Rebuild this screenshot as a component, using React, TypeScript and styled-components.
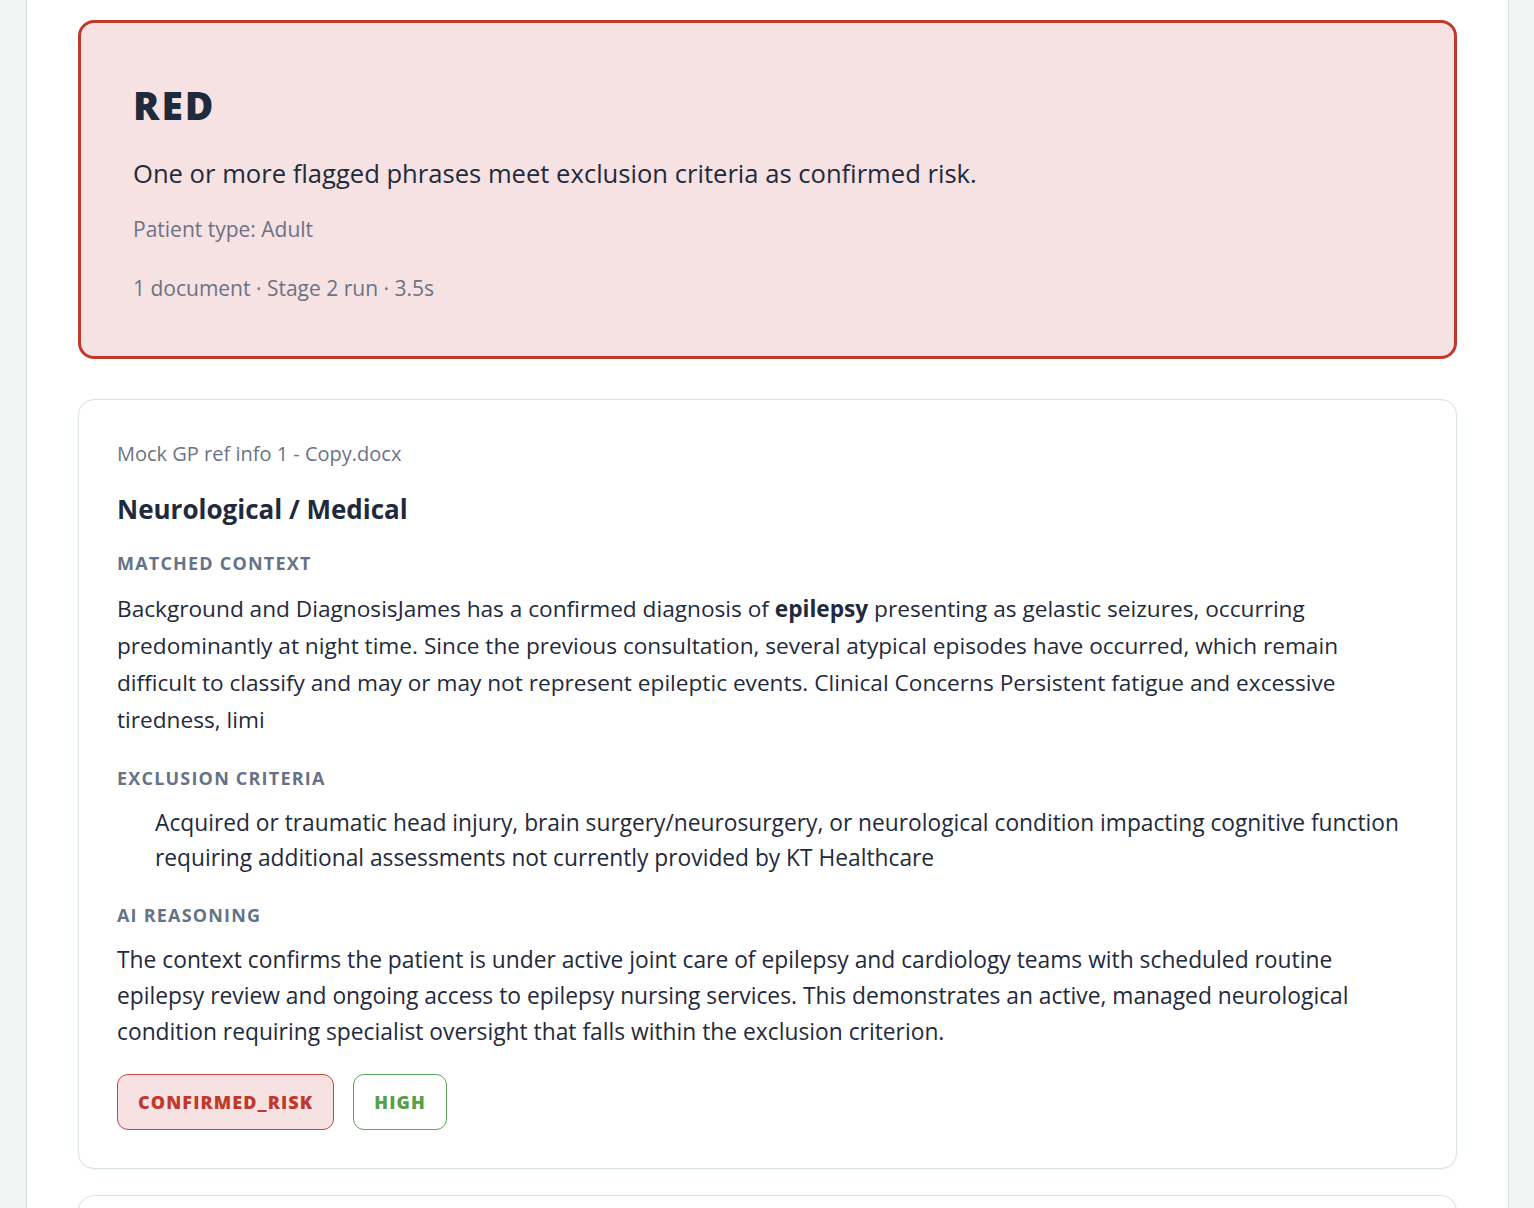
import styled, { createGlobalStyle } from "styled-components";

const GlobalStyle = createGlobalStyle`
  html, body {
    margin: 0;
    padding: 0;
    background: #f1f5f4;
    font-family: "Open Sans", "Noto Sans", sans-serif;
    color: #1f2937;
  }
  * { box-sizing: border-box; }
`;

const Page = styled.div`
  display: flex;
  justify-content: center;
  padding-left: 26px;
  padding-right: 25px;
  min-height: 1208px;
`;

const Panel = styled.main`
  width: 1483px;
  background: #ffffff;
  border-left: 1px solid #d8e4e1;
  border-right: 1px solid #d8e4e1;
  padding: 20px 51px 0;
  display: flex;
  flex-direction: column;
  gap: 26px;
`;

const Verdict = styled.section`
  background: #f7e2e3;
  border: 3px solid #c0392b;
  border-radius: 16px;
  padding: 62px 52px 53px;
  margin-bottom: 14px;
`;

const VerdictTitle = styled.h1`
  margin: 0;
  font-size: 39px;
  font-weight: 800;
  letter-spacing: 2px;
  color: #1f2a3c;
  line-height: 1;
`;

const VerdictText = styled.p`
  margin: 33px 0 0;
  font-size: 25.6px;
  line-height: 1.3;
  color: #1f2a3c;
`;

const Meta = styled.p`
  margin: 25px 0 0;
  font-size: 21px;
  line-height: 1.4;
  color: #6b7385;

  & + & {
    margin-top: 29px;
  }
`;

const Finding = styled.article`
  background: #ffffff;
  border: 1px solid #d8e4e1;
  border-radius: 16px;
  padding: 40px 38px 38px;
  box-shadow: 0 1px 3px rgba(15, 40, 35, 0.05);
`;

const FileName = styled.div`
  font-size: 20px;
  color: #6b7385;
  line-height: 1.4;
`;

const Category = styled.h2`
  margin: 25px 0 0;
  font-size: 26px;
  font-weight: 700;
  color: #1f2a3c;
  line-height: 1.3;
`;

const Label = styled.h3`
  margin: 28px 0 0;
  font-size: 18px;
  font-weight: 700;
  letter-spacing: 1.2px;
  text-transform: uppercase;
  color: #657388;
  line-height: 1.4;

  ${Category} + & {
    margin-top: 24px;
  }
`;

const Body = styled.p<{ $lead?: number; $size?: number }>`
  margin: 14px 0 0;
  font-size: ${(p) => p.$size ?? 22.65}px;
  line-height: ${(p) => p.$lead ?? 37}px;
  color: #1f2a3c;

  strong {
    font-weight: 700;
  }
`;

const Quote = styled.blockquote`
  margin: 14px 0 0 38px;
  font-size: 22.75px;
  line-height: 35px;
  color: #1f2a3c;
`;

const Badges = styled.div`
  display: flex;
  gap: 19px;
  margin-top: 24px;
`;

const Badge = styled.span<{ tone: "risk" | "ok" }>`
  display: inline-flex;
  align-items: center;
  height: 56px;
  padding: 0 20px;
  border-radius: 11px;
  font-size: 18px;
  font-weight: 800;
  letter-spacing: 1.1px;
  background: ${(p) => (p.tone === "risk" ? "#f7e2e3" : "#ffffff")};
  border: 1px solid ${(p) => (p.tone === "risk" ? "#c9473d" : "#5aa55a")};
  color: ${(p) => (p.tone === "risk" ? "#c0392b" : "#55a048")};
`;

const App = () => {
  return (
    <>
      <GlobalStyle />
      <Page>
        <Panel>
          <Verdict>
            <VerdictTitle>RED</VerdictTitle>
            <VerdictText>
              One or more flagged phrases meet exclusion criteria as confirmed
              risk.
            </VerdictText>
            <Meta>Patient type: Adult</Meta>
            <Meta>1 document · Stage 2 run · 3.5s</Meta>
          </Verdict>

          <Finding>
            <FileName>Mock GP ref info 1 - Copy.docx</FileName>
            <Category>Neurological / Medical</Category>
            <Label>Matched context</Label>
            <Body>
              Background and DiagnosisJames has a confirmed diagnosis of{" "}
              <strong>epilepsy</strong> presenting as gelastic seizures,
              occurring predominantly at night time. Since the previous
              consultation, several atypical episodes have occurred, which
              remain difficult to classify and may or may not represent
              epileptic events. Clinical Concerns Persistent fatigue and
              excessive tiredness, limi
            </Body>
            <Label>Exclusion criteria</Label>
            <Quote>
              Acquired or traumatic head injury, brain surgery/neurosurgery, or
              neurological condition impacting cognitive function requiring
              additional assessments not currently provided by KT Healthcare
            </Quote>
            <Label>AI reasoning</Label>
            <Body $lead={36} $size={22.8}>
              The context confirms the patient is under active joint care of
              epilepsy and cardiology teams with scheduled routine epilepsy
              review and ongoing access to epilepsy nursing services. This
              demonstrates an active, managed neurological condition requiring
              specialist oversight that falls within the exclusion criterion.
            </Body>
            <Badges>
              <Badge tone="risk">CONFIRMED_RISK</Badge>
              <Badge tone="ok">HIGH</Badge>
            </Badges>
          </Finding>

          <Finding />
        </Panel>
      </Page>
    </>
  );
};

export default App;
